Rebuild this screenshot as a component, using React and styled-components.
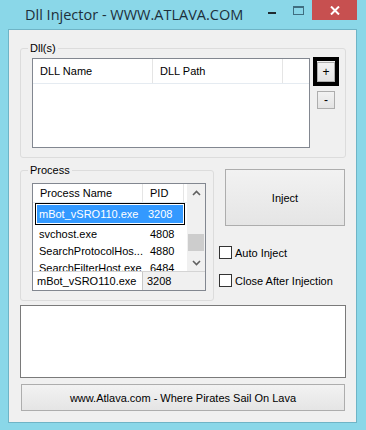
import React from "react";
import styled, { createGlobalStyle } from "styled-components";

const GlobalStyle = createGlobalStyle`
  html, body {
    margin: 0;
    padding: 0;
    background: #8ad7e8;
  }
  body {
    font-family: "Liberation Sans", Arial, sans-serif;
    font-size: 11px;
    color: #000;
  }
`;

const Window = styled.div`
  width: 366px;
  height: 430px;
  display: flex;
  flex-direction: column;
  background: #8ad7e8;
  overflow: hidden;
`;

const TitleBar = styled.div`
  height: 29px;
  display: flex;
  align-items: flex-start;
  flex-shrink: 0;
`;

const Title = styled.div`
  padding-left: 25px;
  line-height: 29px;
  font-family: "Open Sans", "Noto Sans", sans-serif;
  font-size: 14.5px;
  color: #1d2f3b;
  white-space: nowrap;
`;

const Controls = styled.div`
  margin-left: auto;
  margin-right: 9px;
  display: flex;
`;

const CaptionButton = styled.div`
  width: ${(p) => p.$w}px;
  height: 20px;
  display: flex;
  justify-content: center;
  align-items: ${(p) => (p.$center ? "center" : "flex-start")};
  padding-top: ${(p) => p.$top || 0}px;
  box-sizing: border-box;
  background: ${(p) => p.$bg || "transparent"};
`;

const Client = styled.div`
  flex: 1;
  margin: 0 9px 7px 8px;
  background: #f0f0f0;
  border: 1px solid #6fb4c6;
  padding: 12px 10px 0 11px;
  display: flex;
  flex-direction: column;
`;

const Group = styled.fieldset`
  margin: ${(p) => p.$mt || 0}px 0 0 0;
  width: ${(p) => p.$w}px;
  box-sizing: border-box;
  border: 1px solid #dcdcdc;
  border-radius: 3px;
  padding: ${(p) => p.$pad};
  display: flex;
  align-items: flex-start;
`;

const Legend = styled.legend`
  padding: 0 2px;
  margin-left: -4px;
  line-height: 13px;
  font-size: 11px;
`;

const ListFrame = styled.div`
  width: ${(p) => p.$w}px;
  height: ${(p) => p.$h}px;
  box-sizing: border-box;
  border: 1px solid #828790;
  background: #fff;
  display: flex;
  flex-direction: column;
  overflow: hidden;
`;

const Header = styled.div`
  height: ${(p) => p.$h}px;
  display: flex;
  border-bottom: 1px solid #e5ebf1;
  flex-shrink: 0;
  box-sizing: border-box;
`;

const HeaderCell = styled.div`
  width: ${(p) => p.$w}px;
  flex-shrink: 0;
  box-sizing: border-box;
  padding-left: ${(p) => p.$pl || 7}px;
  border-right: ${(p) => (p.$last ? "none" : "1px solid #e5e5e5")};
  display: flex;
  align-items: center;
  white-space: nowrap;
`;

const SideButtons = styled.div`
  margin-left: 3px;
  margin-top: -1px;
  width: 26px;
  display: flex;
  flex-direction: column;
  align-items: center;
  gap: 5px;
`;

const FocusRing = styled.div`
  border: 4px solid #000;
  width: 26px;
  height: 29px;
  box-sizing: border-box;
  display: flex;
  justify-content: center;
  align-items: center;
`;

const SmallButton = styled.div`
  width: 18px;
  height: ${(p) => p.$h || 18}px;
  box-sizing: border-box;
  border: 1px solid #adadad;
  background: linear-gradient(#f2f2f2, #e3e3e3);
  display: flex;
  justify-content: center;
  align-items: center;
  font-size: 12px;
  line-height: 1;
`;

const ListBody = styled.div`
  display: flex;
  height: 87px;
  flex-shrink: 0;
`;

const Rows = styled.div`
  width: 155px;
  display: flex;
  flex-direction: column;
  overflow: hidden;
`;

const Row = styled.div`
  display: flex;
  flex-shrink: 0;
  height: ${(p) => (p.$selected ? 22 : 17)}px;
  box-sizing: border-box;
  margin: ${(p) => (p.$selected ? "0 2px" : "0")};
  border: ${(p) => (p.$selected ? "1px solid #000" : "none")};
  padding: ${(p) => (p.$selected ? "1px" : "0")};
  color: ${(p) => (p.$selected ? "#fff" : "#000")};
`;

const RowFill = styled.div`
  flex: 1;
  display: flex;
  align-items: center;
  background: ${(p) => (p.$selected ? "#3399ff" : "transparent")};
`;

const NameCell = styled.div`
  width: ${(p) => (p.$selected ? 104 : 110)}px;
  padding-left: ${(p) => (p.$selected ? 2 : 6)}px;
  box-sizing: border-box;
  white-space: nowrap;
  overflow: hidden;
`;

const PidCell = styled.div`
  padding-left: 7px;
  white-space: nowrap;
`;

const ScrollBar = styled.div`
  width: 17px;
  border-left: 1px solid #f0f0f0;
  background: #f0f0f0;
  display: flex;
  flex-direction: column;
`;

const ScrollArrow = styled.div`
  height: 17px;
  display: flex;
  justify-content: center;
  align-items: center;
  flex-shrink: 0;
`;

const ScrollTrack = styled.div`
  flex: 1;
`;

const Thumb = styled.div`
  margin: 33px 1px 0 0;
  height: 17px;
  background: #cdcdcd;
`;

const EditRow = styled.div`
  display: flex;
  height: 19px;
  border-top: 1px solid #d4d4d4;
  box-sizing: border-box;
`;

const EditBox = styled.div`
  width: ${(p) => p.$w}px;
  box-sizing: border-box;
  padding-left: ${(p) => p.$pl}px;
  background: ${(p) => (p.$readOnly ? "#f0f0f0" : "#fff")};
  border-right: ${(p) => (p.$readOnly ? "none" : "1px solid #c8c8c8")};
  display: flex;
  align-items: center;
  white-space: nowrap;
`;

const MiddleRow = styled.div`
  display: flex;
  align-items: flex-start;
`;

const RightColumn = styled.div`
  margin-left: 5px;
  margin-top: 11px;
  display: flex;
  flex-direction: column;
`;

const PushButton = styled.div`
  width: ${(p) => p.$w}px;
  height: ${(p) => p.$h}px;
  margin-left: ${(p) => p.$ml || 0}px;
  box-sizing: border-box;
  border: 1px solid #adadad;
  background: linear-gradient(#f2f2f2, #e5e5e5);
  display: flex;
  justify-content: center;
  align-items: center;
  white-space: nowrap;
`;

const CheckRow = styled.label`
  display: flex;
  align-items: center;
  gap: 3px;
  margin-top: ${(p) => p.$mt}px;
  height: 13px;
  white-space: nowrap;
`;

const CheckBox = styled.span`
  width: 13px;
  height: 13px;
  box-sizing: border-box;
  border: 1px solid #333;
  background: #fff;
  flex-shrink: 0;
`;

const OutputBox = styled.div`
  margin-top: 4px;
  width: 326px;
  height: 73px;
  box-sizing: border-box;
  border: 1px solid #7a7a7a;
  background: #fff;
`;

const FooterButton = styled(PushButton)`
  margin-top: 6px;
`;

const processes = [
  { name: "mBot_vSRO110.exe", pid: "3208", selected: true },
  { name: "svchost.exe", pid: "4808" },
  { name: "SearchProtocolHos...", pid: "4880" },
  { name: "SearchFilterHost.exe", pid: "6484" },
];

function Chevron({ down }) {
  return (
    <svg width="9" height="6" viewBox="0 0 9 6">
      <path
        d={down ? "M1 1 L4.5 4.5 L8 1" : "M1 5 L4.5 1.5 L8 5"}
        fill="none"
        stroke="#606060"
        strokeWidth="1.6"
      />
    </svg>
  );
}

export default function App() {
  return (
    <>
      <GlobalStyle />
      <Window>
        <TitleBar>
          <Title>Dll Injector - WWW.ATLAVA.COM</Title>
          <Controls>
            <CaptionButton $w={26} $top={12}>
              <svg width="8" height="2">
                <rect width="8" height="2" fill="#1f2a30" />
              </svg>
            </CaptionButton>
            <CaptionButton $w={27} $top={6}>
              <svg width="11" height="9" viewBox="0 0 11 9">
                <rect x="0.5" y="0.5" width="10" height="8" fill="none" stroke="#3f6e80" />
                <rect x="0" y="0" width="11" height="2" fill="#3f6e80" />
              </svg>
            </CaptionButton>
            <CaptionButton $w={45} $bg="#c75050" $center>
              <svg width="10" height="9" viewBox="0 0 10 9">
                <path d="M1 0.5 L9 8.5 M9 0.5 L1 8.5" stroke="#fff" strokeWidth="2" />
              </svg>
            </CaptionButton>
          </Controls>
        </TitleBar>

        <Client>
          <Group $w={326} $pad="3px 6px 9px 11px">
            <Legend>Dll(s)</Legend>
            <ListFrame $w={278} $h={90}>
              <Header $h={25}>
                <HeaderCell $w={120}>DLL Name</HeaderCell>
                <HeaderCell $w={130}>DLL Path</HeaderCell>
                <HeaderCell $w={26} $last />
              </Header>
            </ListFrame>
            <SideButtons>
              <FocusRing>
                <SmallButton $h={20}>+</SmallButton>
              </FocusRing>
              <SmallButton>-</SmallButton>
            </SideButtons>
          </Group>

          <MiddleRow>
            <Group $w={194} $mt={6} $pad="6px 7px 9px 11px">
              <Legend>Process</Legend>
              <ListFrame $w={174} $h={108}>
                <ListBody>
                  <Rows>
                    <Header $h={19}>
                      <HeaderCell $w={110}>Process Name</HeaderCell>
                      <HeaderCell $w={41}>PID</HeaderCell>
                    </Header>
                    {processes.map((p) => (
                      <Row key={p.name} $selected={p.selected}>
                        <RowFill $selected={p.selected}>
                          <NameCell $selected={p.selected}>{p.name}</NameCell>
                          <PidCell>{p.pid}</PidCell>
                        </RowFill>
                      </Row>
                    ))}
                  </Rows>
                  <ScrollBar>
                    <ScrollArrow>
                      <Chevron />
                    </ScrollArrow>
                    <ScrollTrack>
                      <Thumb />
                    </ScrollTrack>
                    <ScrollArrow>
                      <Chevron down />
                    </ScrollArrow>
                  </ScrollBar>
                </ListBody>
                <EditRow>
                  <EditBox $w={110} $pl={4}>mBot_vSRO110.exe</EditBox>
                  <EditBox $w={62} $pl={4} $readOnly>3208</EditBox>
                </EditRow>
              </ListFrame>
            </Group>

            <RightColumn>
              <PushButton $w={120} $h={57} $ml={6}>Inject</PushButton>
              <CheckRow $mt={20}>
                <CheckBox />
                Auto Inject
              </CheckRow>
              <CheckRow $mt={15}>
                <CheckBox />
                Close After Injection
              </CheckRow>
            </RightColumn>
          </MiddleRow>

          <OutputBox />
          <FooterButton $w={324} $h={27} $ml={1}>
            www.Atlava.com - Where Pirates Sail On Lava
          </FooterButton>
        </Client>
      </Window>
    </>
  );
}
